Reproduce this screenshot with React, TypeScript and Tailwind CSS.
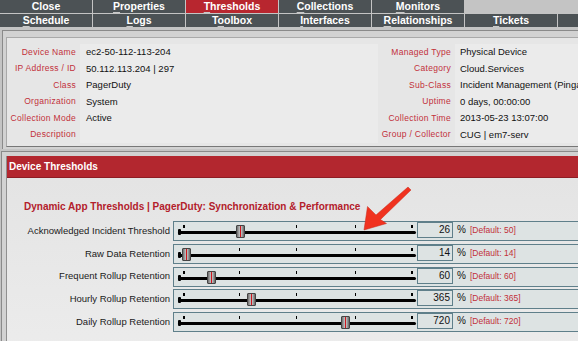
import React from 'react';

const TOP_TABS = [
  { label: 'Close', key: -1 },
  { label: 'Properties', key: 0 },
  { label: 'Thresholds', key: 0, active: true },
  { label: 'Collections', key: 0 },
  { label: 'Monitors', key: 0 },
];

const BOTTOM_TABS = [
  { label: 'Schedule', key: 0 },
  { label: 'Logs', key: 0 },
  { label: 'Toolbox', key: 1 },
  { label: 'Interfaces', key: 0 },
  { label: 'Relationships', key: 0 },
  { label: 'Tickets', key: 0 },
];

const INFO = [
  ['Device Name', 'ec2-50-112-113-204', 'Managed Type', 'Physical Device'],
  ['IP Address / ID', '50.112.113.204 | 297', 'Category', 'Cloud.Services'],
  ['Class', 'PagerDuty', 'Sub-Class', 'Incident Management (Pinga'],
  ['Organization', 'System', 'Uptime', '0 days, 00:00:00'],
  ['Collection Mode', 'Active', 'Collection Time', '2013-05-23 13:07:00'],
  ['Description', '', 'Group / Collector', 'CUG | em7-serv'],
];

const THRESHOLDS = [
  { label: 'Acknowledged Incident Threshold', value: 26, def: 50, handle: 62 },
  { label: 'Raw Data Retention', value: 14, def: 14, handle: 8 },
  { label: 'Frequent Rollup Retention', value: 60, def: 60, handle: 33 },
  { label: 'Hourly Rollup Retention', value: 365, def: 365, handle: 73 },
  { label: 'Daily Rollup Retention', value: 720, def: 720, handle: 167 },
];

const TICKS = [9, 65, 122, 181, 237];

function TabLabel({ label, k }: { label: string; k: number }) {
  if (k < 0) return <>{label}</>;
  return (
    <>
      {label.slice(0, k)}
      <span className="underline decoration-[#c9c9c9] underline-offset-[2px]">{label[k]}</span>
      {label.slice(k + 1)}
    </>
  );
}

function Tab({ label, k, active }: { label: string; k: number; active?: boolean }) {
  return (
    <div
      className={`w-[92px] h-[13px] flex items-center justify-center text-white font-bold text-[10.5px] leading-none ${
        active ? 'bg-[#b8262f]' : 'bg-[#4c5255]'
      }`}
    >
      <span>
        <TabLabel label={label} k={k} />
      </span>
    </div>
  );
}

function Slider({ handle }: { handle: number }) {
  return (
    <div className="relative w-[243px] h-full">
      {TICKS.map((x, i) => (
        <div
          key={x}
          className={`absolute top-[3px] h-[3px] bg-black ${i === 0 || i === 4 ? 'w-[2px]' : 'w-px'}`}
          style={{ left: x }}
        />
      ))}
      <div className="absolute top-[9px] left-[4px] right-[1px] h-[3px] rounded-full bg-black" />
      <div className="absolute top-[7px] left-[4px] w-[3px] h-[6px] rounded-[1px] bg-black" />
      <div
        className="absolute top-[3px] w-[9px] h-[13px] rounded-[1px] border border-[#444] bg-gradient-to-r from-[#6f6f6f] via-[#d8d8d8] to-[#666] flex justify-center"
        style={{ left: handle }}
      >
        <div className="w-[1.5px] h-full bg-[#d0141c]" />
      </div>
    </div>
  );
}

export default function App() {
  return (
    <div className="relative w-[578px] h-[341px] overflow-hidden bg-[#c4c4c4] font-['Liberation_Sans',Arial,sans-serif]">
      {/* Tab bar */}
      <div className="flex flex-col gap-px bg-[#c4c4c4] h-[28px]">
        <div className="flex gap-px">
          {TOP_TABS.map((t) => (
            <Tab key={t.label} label={t.label} k={t.key} active={t.active} />
          ))}
        </div>
        <div className="flex gap-px">
          {BOTTOM_TABS.map((t) => (
            <Tab key={t.label} label={t.label} k={t.key} />
          ))}
          <div className="flex-1 h-[13px] bg-[#4c5255]" />
        </div>
      </div>

      {/* Device info */}
      <div className="pl-[2px] pt-[2px]">
        <div className="border-l border-t border-[#8a8a8a] bg-[#d2d2d2] pl-[3px] pt-[6px] pb-[2px]">
          <div className="border-l border-t border-b border-[#a9a9a9] border-b-[#777] bg-[#e6e6e6] pt-[6px] pb-[3px]">
            {INFO.map((r) => (
              <div key={r[0]} className="flex h-[16.5px] items-center">
                <div className="w-[73px] pr-[4px] text-right text-[8.5px] text-[#c2303a] tracking-[0.3px] whitespace-nowrap">{r[0]}</div>
                <div className="w-[298px] pl-[6px] text-[9.5px] text-[#111] bg-[#ebebeb] h-full flex items-center">{r[1]}</div>
                <div className="w-[77px] pr-[4px] text-right text-[8.5px] text-[#c2303a] tracking-[0.3px] whitespace-nowrap">{r[2]}</div>
                <div className="flex-1 pl-[5px] text-[9.5px] text-[#111] whitespace-nowrap overflow-hidden bg-[#ebebeb] h-full flex items-center">
                  {r[3]}
                </div>
              </div>
            ))}
          </div>
        </div>
      </div>

      {/* Device thresholds */}
      <div className="pl-[1px] pt-[2px] h-full">
        <div className="border-l border-t border-[#8a8a8a] bg-[#d2d2d2] pl-[4px] pt-[4px] h-full">
          <div className="h-full border-l border-[#8f8f8f] bg-gradient-to-b from-[#e3e3e3] to-[#f2f2f2]">
            <div className="h-[22px] bg-[#b3272f] border-b border-[#8e1d24] flex items-center pl-[2px] text-white font-bold text-[10px]">
              Device Thresholds
            </div>
            <div className="pt-[23px] pl-[17px] text-[#b3202b] font-bold text-[10px] leading-[12px]">
              Dynamic App Thresholds | PagerDuty: Synchronization &amp; Performance
            </div>
            <div className="mt-[8px] flex flex-col gap-[2.75px]">
              {THRESHOLDS.map((t) => (
                <div key={t.label} className="flex items-center">
                  <div className="w-[166px] pr-[3px] text-right text-[9.5px] text-[#1a1a1a] whitespace-nowrap">
                    {t.label}
                  </div>
                  <div className="flex-1 h-[20px] flex items-start border-y border-l border-[#5f7f8a] bg-[#dde3e3]">
                    <Slider handle={t.handle} />
                    <div className="w-[36px] h-[16px] border border-[#5f7f8a] bg-[#dde3e3] text-right pr-[2px] text-[10px] leading-[14px] text-[#111]">
                      {t.value}
                    </div>
                    <div className="ml-[4px] text-[10px] leading-[16px] text-[#111]">%</div>
                    <div className="ml-[4px] text-[8.5px] leading-[16px] text-[#c2303a]">[Default: {t.def}]</div>
                  </div>
                </div>
              ))}
            </div>
          </div>
        </div>
      </div>

      {/* Callout arrow */}
      <svg className="absolute left-0 top-0 pointer-events-none" width="578" height="341">
        <polygon
          points="411,190 380.5,219.5 386.5,223.5 364,230 367.5,206.5 376,215 408,187"
          fill="#f0321f"
          stroke="#c8281a"
          strokeWidth="0.5"
          strokeLinejoin="round"
        />
      </svg>
    </div>
  );
}
